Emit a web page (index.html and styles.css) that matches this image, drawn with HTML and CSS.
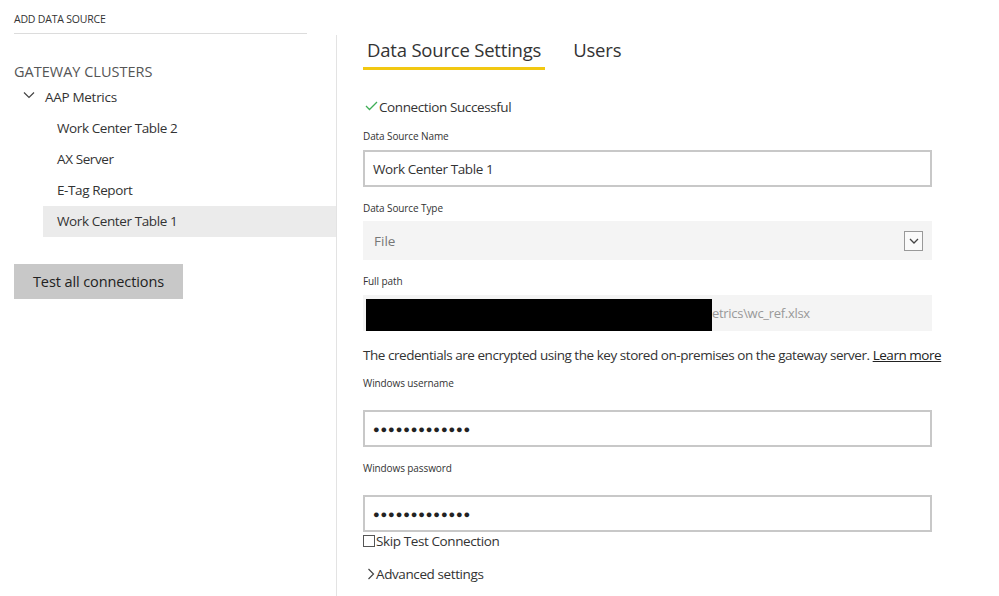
FILE: index.html
```html
<!DOCTYPE html>
<html>
<head>
<meta charset="utf-8">
<link rel="stylesheet" href="styles.css">
</head>
<body>
<div class="page">
  <aside class="side">
    <div class="side-head"><span>ADD DATA SOURCE</span></div>
    <nav class="side-nav">
      <div class="clusters">GATEWAY CLUSTERS</div>
      <div class="cluster">
        <svg class="chev" width="12" height="8" viewBox="0 0 12 8"><path d="M1 1.5 L6 6.5 L11 1.5" fill="none" stroke="#444" stroke-width="1.2"/></svg>
        <span>AAP Metrics</span>
      </div>
      <ul class="sources">
        <li>Work Center Table 2</li>
        <li>AX Server</li>
        <li>E-Tag Report</li>
        <li class="selected">Work Center Table 1</li>
      </ul>
      <div class="btn">Test all connections</div>
    </nav>
  </aside>
  <main class="main">
    <div class="tabs">
      <div class="tab active">Data Source Settings</div>
      <div class="tab">Users</div>
    </div>
    <div class="status">
      <svg width="13" height="10" viewBox="0 0 13 10"><path d="M1 5 L4.5 8.5 L12 1" fill="none" stroke="#3fae56" stroke-width="1.3"/></svg>
      <span>Connection Successful</span>
    </div>
    <div class="label">Data Source Name</div>
    <div class="input">Work Center Table 1</div>
    <div class="label">Data Source Type</div>
    <div class="select">
      <span>File</span>
      <span class="dd"><svg width="12" height="8" viewBox="0 0 12 8"><path d="M2 2 L6 6 L10 2" fill="none" stroke="#444" stroke-width="1.3"/></svg></span>
    </div>
    <div class="label">Full path</div>
    <div class="path"><span class="redact"></span><span class="path-text">etrics\wc_ref.xlsx</span></div>
    <p class="note">The credentials are encrypted using the key stored on-premises on the gateway server. <a>Learn more</a></p>
    <div class="label lbl-cred first">Windows username</div>
    <div class="input dots">●●●●●●●●●●●●●</div>
    <div class="label lbl-cred">Windows password</div>
    <div class="input dots">●●●●●●●●●●●●●</div>
    <div class="skip"><span class="box"></span><span>Skip Test Connection</span></div>
    <div class="adv"><svg width="8" height="12" viewBox="0 0 8 12"><path d="M1.5 1 L6.5 6 L1.5 11" fill="none" stroke="#444" stroke-width="1.2"/></svg><span>Advanced settings</span></div>
  </main>
</div>
</body>
</html>
```

FILE: styles.css
```css
* { box-sizing: border-box; }
html, body { margin: 0; padding: 0; background: #fff; }
body {
  font-family: "Open Sans", "Noto Sans", "Liberation Sans", sans-serif;
  color: #333;
  width: 999px;
  height: 596px;
  overflow: hidden;
}
.page { display: flex; height: 596px; }
.side { width: 337px; display: flex; flex-direction: column; }
.side-head { padding: 0 30px 0 14px; height: 35px; }
.side-head span {
  display: block;
  font-size: 10.5px;
  letter-spacing: -0.2px;
  color: #333;
  padding-top: 12px;
  height: 34px;
  border-bottom: 1px solid #dcdcdc;
}
.side-nav { flex: 1; border-right: 1px solid #e3e3e3; padding-top: 27px; }
.clusters { font-size: 14.5px; color: #555; padding-left: 14px; line-height: 20px; letter-spacing: 0; }
.cluster { display: flex; align-items: center; padding-left: 23px; margin-top: 4px; height: 22px; font-size: 13.5px; color: #333; letter-spacing: -0.3px; }
.cluster .chev { margin-right: 10px; margin-top: -4px; }
.sources { list-style: none; margin: 5px 0 0 43px; padding: 0; }
.sources li { height: 31px; line-height: 31px; padding-left: 14px; font-size: 13.5px; color: #333; letter-spacing: -0.4px; }
.sources li.selected { background: #ebebeb; }
.btn {
  margin: 27px 0 0 14px;
  width: 169px;
  height: 35px;
  background: #c8c8c8;
  font-size: 14.5px;
  color: #222;
  display: flex; align-items: center; justify-content: center;
  letter-spacing: -0.1px;
}
.main { flex: 1; padding: 32px 0 0 26px; }
.tabs { display: flex; gap: 24px; height: 38px; }
.tab { font-size: 18.5px; color: #333; padding: 0 4px; height: 38px; line-height: 36px; letter-spacing: -0.2px; }
.tab.active { border-bottom: 3px solid #f2c811; }
.status { display: flex; align-items: center; margin-top: 28px; height: 18px; font-size: 13.5px; color: #333; letter-spacing: -0.4px; }
.status svg { margin: -2px 1px 0 2px; }
.label { font-size: 10px; color: #333; margin-top: 14px; height: 14px; line-height: 14px; letter-spacing: -0.1px; }
.status + .label { margin-top: 13px; }
.input {
  margin-top: 7px;
  width: 569px; height: 37px;
  border: 2px solid #c8c8c8;
  padding-left: 8px;
  display: flex; align-items: center;
  font-size: 13.5px; color: #333;
  letter-spacing: -0.4px;
}
.select {
  margin-top: 6px;
  width: 569px; height: 39px;
  background: #f4f4f4;
  display: flex; align-items: center; justify-content: space-between;
  padding: 0 9px 0 11px;
  font-size: 13.5px; color: #777;
}
.dd { width: 19px; height: 20px; border: 1px solid #999; background: #fafafa; display: flex; align-items: center; justify-content: center; }
.path {
  margin-top: 7px;
  width: 569px; height: 36px;
  background: #f4f4f4;
  display: flex; align-items: center;
  padding-left: 3px;
}
.redact { width: 346px; height: 32px; background: #000; margin-top: 3px; }
.path-text { font-size: 13px; color: #999; letter-spacing: -0.3px; }
.note { margin: 15px 0 0; font-size: 13.5px; color: #333; line-height: 18px; letter-spacing: -0.46px; white-space: nowrap; }
.note a { color: #222; text-decoration: underline; }
.label.lbl-cred.first { margin-top: 12px; }
.lbl-cred + .input { margin-top: 20px; }
.dots { font-size: 11px; letter-spacing: 0.9px; color: #222; }
.skip { display: flex; align-items: center; height: 18px; margin-top: 0; font-size: 13.5px; color: #333; letter-spacing: -0.4px; }
.box { width: 12px; height: 12px; border: 1px solid #555; margin-right: 1px; }
.adv { display: flex; align-items: center; margin-top: 15px; margin-left: 4px; height: 18px; font-size: 13.5px; color: #333; letter-spacing: -0.4px; }
.adv svg { margin-right: 1px; }
```
